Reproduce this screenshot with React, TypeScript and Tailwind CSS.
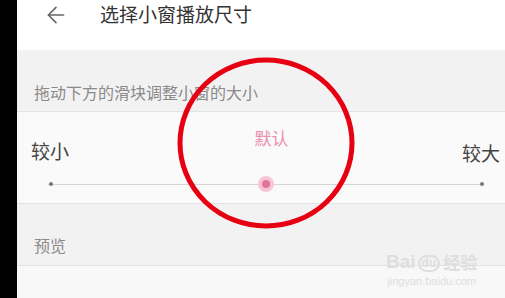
import { ArrowLeft } from "lucide-react";

const font = { fontFamily: '"Noto Sans CJK SC", "Noto Sans", sans-serif' };

function Slider() {
	return (
		<div className="relative ml-[31px] mr-[22px] mt-[2px] h-[16px]">
			<div className="absolute left-0 right-0 top-[7.5px] h-px bg-[#d6d6d6]" />
			<div className="absolute left-[1px] top-[6px] h-[4px] w-[4px] rounded-full bg-[#777]" />
			<div className="absolute right-[-1px] top-[6px] h-[4px] w-[4px] rounded-full bg-[#777]" />
			<div className="absolute left-[210px] top-0 flex h-[16px] w-[16px] items-center justify-center rounded-full bg-[#f5c6d6]">
				<div className="h-[8px] w-[8px] rounded-full bg-[#e2739a]" />
			</div>
		</div>
	);
}

export default function App() {
	return (
		<div className="relative flex h-[298px] w-[505px] overflow-hidden bg-black" style={font}>
			<div className="w-[17px] shrink-0 bg-black" />
			<div className="flex flex-1 flex-col bg-[#fafafa]">
				<header className="flex h-[50px] items-start bg-white pt-[1px]">
					<ArrowLeft className="ml-[26px] mt-[1px] h-[26px] w-[26px] text-[#666]" strokeWidth={1.5} />
					<h1 className="ml-[31px] text-[19px] leading-[26px] text-[#333]">选择小窗播放尺寸</h1>
				</header>
				<div className="flex h-[62px] items-end border-b border-[#e3e3e3] bg-[#f2f2f2] px-[17px] pb-[8px]">
					<span className="text-[16px] leading-[22px] text-[#8a8a8a]">拖动下方的滑块调整小窗的大小</span>
				</div>
				<div className="flex h-[92px] flex-col border-b border-[#e3e3e3] bg-[#fafafa]">
					<div className="flex h-[62px] items-start justify-between pl-[14px] pr-[5px]">
						<span className="mt-[27px] text-[19px] leading-[24px] text-[#444]">较小</span>
						<span className="ml-[12px] mt-[15px] text-[17px] leading-[22px] text-[#ea8fae]">默认</span>
						<span className="mt-[29px] text-[19px] leading-[24px] text-[#444]">较大</span>
					</div>
					<Slider />
				</div>
				<div className="flex h-[62px] items-end border-b border-[#e3e3e3] bg-[#f2f2f2] px-[17px] pb-[9px]">
					<span className="text-[16px] leading-[22px] text-[#8a8a8a]">预览</span>
				</div>
				<div className="flex-1 bg-[#f8f8f8]" />
			</div>

			<svg className="pointer-events-none absolute left-0 top-0" width="505" height="298">
				<ellipse cx="266" cy="143" rx="86" ry="83" fill="none" stroke="#e60012" strokeWidth="5" />
			</svg>

			<div className="pointer-events-none absolute left-[386px] top-[252px] flex flex-col items-center text-[#dedede]">
				<div className="flex items-end text-[19px] font-bold leading-[20px]" style={{ fontFamily: '"Liberation Sans", sans-serif' }}>
					<span>Bai</span>
					<span className="ml-[2px] rounded-full border-2 border-[#dedede] px-[2px] text-[12px] leading-[13px]">du</span>
					<span className="ml-[3px] text-[17px]" style={font}>经验</span>
				</div>
				<span className="mt-[3px] text-[11px] leading-[12px]" style={{ fontFamily: '"Liberation Sans", sans-serif' }}>jingyan.baidu.com</span>
			</div>
		</div>
	);
}
